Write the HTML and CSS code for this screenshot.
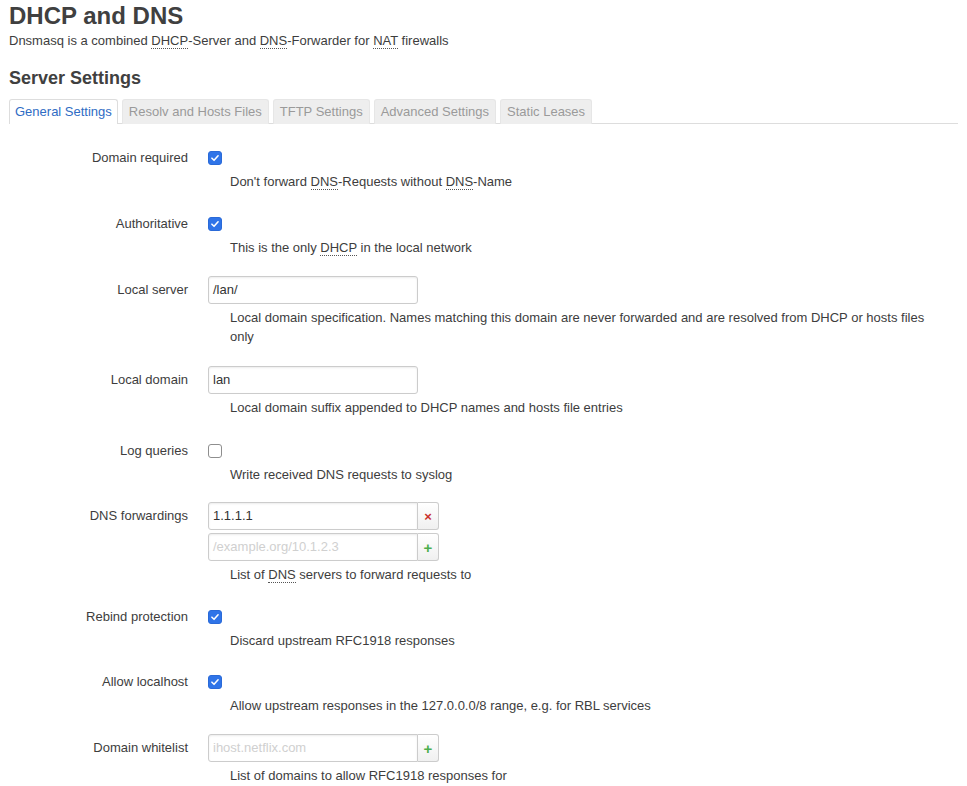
FILE: index.html
```html
<!DOCTYPE html>
<html>
<head>
<meta charset="utf-8">
<link rel="stylesheet" href="styles.css">
</head>
<body>
<div class="page">
  <h1 class="title">DHCP and DNS</h1>
  <div class="subtitle">Dnsmasq is a combined <abbr>DHCP</abbr>-Server and <abbr>DNS</abbr>-Forwarder for <abbr>NAT</abbr> firewalls</div>
  <h2 class="section">Server Settings</h2>
  <ul class="tabs">
    <li class="tab active">General Settings</li>
    <li class="tab">Resolv and Hosts Files</li>
    <li class="tab">TFTP Settings</li>
    <li class="tab">Advanced Settings</li>
    <li class="tab">Static Leases</li>
  </ul>

  <div class="rows">
    <div class="row">
      <div class="label">Domain required</div>
      <div class="field">
        <div class="ctrl"><span class="cb on"><svg viewBox="0 0 14 14"><path d="M3.4 7.2 L5.9 9.7 L10.6 4.4" /></svg></span></div>
        <div class="desc">Don't forward <abbr>DNS</abbr>-Requests without <abbr>DNS</abbr>-Name</div>
      </div>
    </div>

    <div class="row">
      <div class="label">Authoritative</div>
      <div class="field">
        <div class="ctrl"><span class="cb on"><svg viewBox="0 0 14 14"><path d="M3.4 7.2 L5.9 9.7 L10.6 4.4" /></svg></span></div>
        <div class="desc">This is the only <abbr>DHCP</abbr> in the local network</div>
      </div>
    </div>

    <div class="row">
      <div class="label">Local server</div>
      <div class="field">
        <div class="ctrl"><span class="input">/lan/</span></div>
        <div class="desc desc-in">Local domain specification. Names matching this domain are never forwarded and are resolved from DHCP or hosts files only</div>
      </div>
    </div>

    <div class="row loose">
      <div class="label">Local domain</div>
      <div class="field">
        <div class="ctrl"><span class="input">lan</span></div>
        <div class="desc desc-in">Local domain suffix appended to DHCP names and hosts file entries</div>
      </div>
    </div>

    <div class="row loose">
      <div class="label">Log queries</div>
      <div class="field">
        <div class="ctrl"><span class="cb"></span></div>
        <div class="desc">Write received DNS requests to syslog</div>
      </div>
    </div>

    <div class="row tight">
      <div class="label">DNS forwardings</div>
      <div class="field">
        <div class="ctrl dyn"><span class="input joined">1.1.1.1</span><span class="btn del">×</span></div>
        <div class="ctrl dyn second"><span class="input joined ph">/example.org/10.1.2.3</span><span class="btn add">+</span></div>
        <div class="desc desc-in">List of <abbr>DNS</abbr> servers to forward requests to</div>
      </div>
    </div>

    <div class="row">
      <div class="label">Rebind protection</div>
      <div class="field">
        <div class="ctrl"><span class="cb on"><svg viewBox="0 0 14 14"><path d="M3.4 7.2 L5.9 9.7 L10.6 4.4" /></svg></span></div>
        <div class="desc">Discard upstream RFC1918 responses</div>
      </div>
    </div>

    <div class="row tight">
      <div class="label">Allow localhost</div>
      <div class="field">
        <div class="ctrl"><span class="cb on"><svg viewBox="0 0 14 14"><path d="M3.4 7.2 L5.9 9.7 L10.6 4.4" /></svg></span></div>
        <div class="desc">Allow upstream responses in the 127.0.0.0/8 range, e.g. for RBL services</div>
      </div>
    </div>

    <div class="row">
      <div class="label">Domain whitelist</div>
      <div class="field">
        <div class="ctrl dyn"><span class="input joined ph">ihost.netflix.com</span><span class="btn add">+</span></div>
        <div class="desc desc-in">List of domains to allow RFC1918 responses for</div>
      </div>
    </div>
  </div>
</div>
</body>
</html>
```

FILE: styles.css
```css
* { box-sizing: border-box; }
html, body { margin: 0; padding: 0; background: #fff; }
body {
  font-family: "Liberation Sans", Arial, Helvetica, sans-serif;
  font-size: 13px;
  color: #3d3d3d;
}
.page { padding: 0 9px; }
.title {
  margin: 0;
  font-size: 24px;
  line-height: 31px;
  font-weight: bold;
  color: #404040;
}
.subtitle { line-height: 20px; }
abbr {
  text-decoration: none;
  border-bottom: 1px dotted #555;
}
.section {
  margin: 15px 0 0;
  font-size: 18px;
  line-height: 24px;
  font-weight: bold;
  color: #404040;
}
.tabs {
  list-style: none;
  margin: 9px 0 0;
  padding: 0;
  display: flex;
  gap: 4px;
  border-bottom: 1px solid #ddd;
  height: 25px;
}
.tab {
  height: 25px;
  line-height: 24px;
  padding: 0 6px;
  background: #eee;
  color: #9a9a9a;
  border: 1px solid #e6e6e6;
  border-bottom: none;
  border-radius: 3px 3px 0 0;
}
.tab.active {
  background: #fff;
  color: #2f6cc4;
  border-color: #ddd;
  padding: 0 5px;
  margin-bottom: -1px;
}
.rows { display: flex; flex-direction: column; padding-top: 1px; }
.row { display: flex; margin-top: 19px; }
.row.loose { margin-top: 20px; }
.row.tight { margin-top: 18px; }
.label {
  width: 179px;
  margin-right: 20px;
  text-align: right;
  line-height: 28px;
  flex: none;
}
.field { flex: 1; min-width: 0; }
.ctrl {
  height: 28px;
  display: flex;
  align-items: center;
}
.ctrl.second { margin-top: 3px; }
.cb {
  width: 14px;
  height: 14px;
  border: 1px solid #8e8e8e;
  border-radius: 3px;
  background: #fff;
  display: inline-block;
}
.cb.on {
  background: #2f74e8;
  border-color: #2a6ad8;
}
.cb svg { display: block; width: 12px; height: 12px; }
.cb svg path {
  fill: none;
  stroke: #fff;
  stroke-width: 1.8;
  stroke-linecap: round;
  stroke-linejoin: round;
}
.input {
  display: block;
  width: 210px;
  height: 28px;
  line-height: 26px;
  padding: 0 4px;
  border: 1px solid #ccc;
  border-radius: 3px;
  box-shadow: inset 0 1px 2px rgba(0,0,0,0.08);
  color: #333;
  white-space: nowrap;
  overflow: hidden;
}
.input.joined { border-radius: 3px 0 0 3px; }
.input.ph { color: #d0d0d0; }
.btn {
  width: 21px;
  height: 28px;
  border: 1px solid #ccc;
  border-left: none;
  border-radius: 0 3px 3px 0;
  background: linear-gradient(#fff, #f0f0f0);
  display: flex;
  align-items: center;
  justify-content: center;
  font-weight: bold;
}
.btn.del { color: #c9302c; font-size: 13px; }
.btn.add { color: #4cae4c; font-size: 15px; }
.desc {
  padding-left: 22px;
  padding-right: 8px;
  line-height: 19px;
}
.desc-in { margin-top: 4px; }
```
